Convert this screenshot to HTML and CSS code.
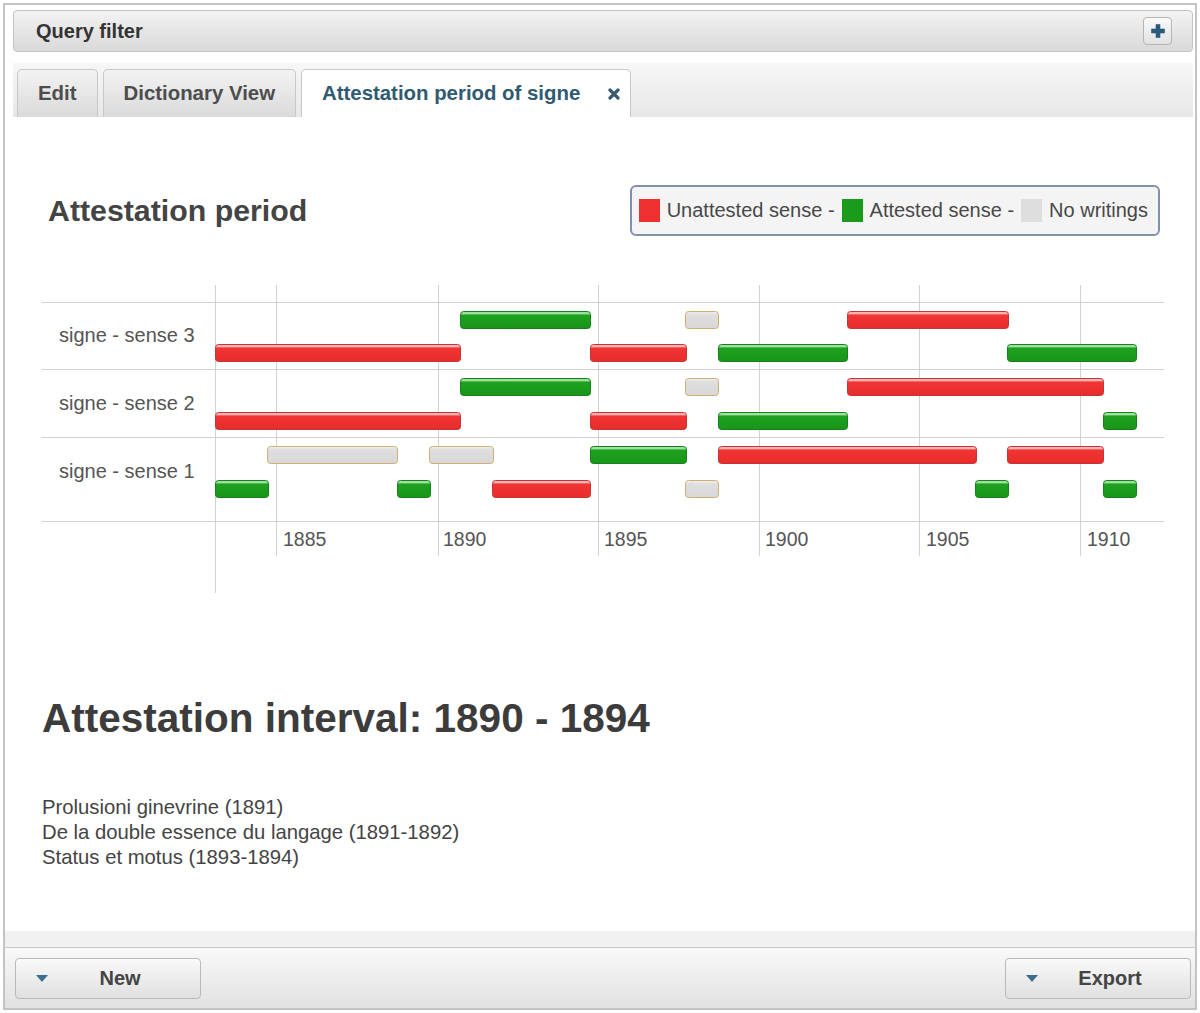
FILE: index.html
```html
<!DOCTYPE html>
<html>
<head>
<meta charset="utf-8">
<title>Attestation period</title>
<link rel="stylesheet" href="styles.css">
</head>
<body>
<div class="frame">
  <div class="qf-header">
    <span class="qf-title">Query filter</span>
    <button class="icon-btn" aria-label="Add">
      <svg width="14" height="14" viewBox="0 0 14 14"><path d="M5 0.5h4v4.5h4.5v4H9v4.5H5V9H0.5V5H5z" fill="#2c5a7a" stroke="#2c5a7a" stroke-width="0.6" stroke-linejoin="round"/></svg>
    </button>
  </div>

  <div class="tabbar">
    <div class="tab">Edit</div>
    <div class="tab">Dictionary View</div>
    <div class="tab active">Attestation period of signe
      <svg class="close" width="12" height="12" viewBox="0 0 12 12"><path d="M2 2L10 10M10 2L2 10" stroke="#3a5b6f" stroke-width="3.2" stroke-linecap="round"/></svg>
    </div>
  </div>

  <div class="content">
    <div class="chart-head">
      <h2 class="chart-title">Attestation period</h2>
      <div class="legend">
        <span class="sw sw-red"></span><span>Unattested sense -</span>
        <span class="sw sw-green"></span><span>Attested sense -</span>
        <span class="sw sw-gray"></span><span>No writings</span>
      </div>
    </div>

    <svg class="chart" width="1122" height="308" viewBox="0 0 1122 308">
      <defs>
        <linearGradient id="gr" x1="0" y1="0" x2="0" y2="1">
          <stop offset="0" stop-color="#f9b3b3"/>
          <stop offset="0.14" stop-color="#f9b3b3"/>
          <stop offset="0.2" stop-color="#f13434"/>
          <stop offset="1" stop-color="#e82c2c"/>
        </linearGradient>
        <linearGradient id="gg" x1="0" y1="0" x2="0" y2="1">
          <stop offset="0" stop-color="#9fe0a0"/>
          <stop offset="0.14" stop-color="#9fe0a0"/>
          <stop offset="0.2" stop-color="#1ea21e"/>
          <stop offset="1" stop-color="#199519"/>
        </linearGradient>
        <linearGradient id="gy" x1="0" y1="0" x2="0" y2="1">
          <stop offset="0" stop-color="#f2f2f2"/>
          <stop offset="0.2" stop-color="#dedede"/>
          <stop offset="1" stop-color="#d8d8d8"/>
        </linearGradient>
      </defs>

      <g class="grid">
        <line x1="0" y1="17.5" x2="1122" y2="17.5"/>
        <line x1="0" y1="84.5" x2="1122" y2="84.5"/>
        <line x1="0" y1="152.5" x2="1122" y2="152.5"/>
        <line x1="0" y1="236.5" x2="1122" y2="236.5"/>
        <line x1="173.5" y1="0" x2="173.5" y2="308"/>
        <line x1="234.5" y1="0" x2="234.5" y2="271"/>
        <line x1="396.5" y1="0" x2="396.5" y2="271"/>
        <line x1="556.5" y1="0" x2="556.5" y2="271"/>
        <line x1="717.5" y1="0" x2="717.5" y2="271"/>
        <line x1="877.5" y1="0" x2="877.5" y2="271"/>
        <line x1="1038.5" y1="0" x2="1038.5" y2="271"/>
      </g>

      <g class="lbl rows">
        <text x="17" y="57">signe - sense 3</text>
        <text x="17" y="125">signe - sense 2</text>
        <text x="17" y="193">signe - sense 1</text>
      </g>
      <g class="lbl years">
        <text x="241" y="261">1885</text>
        <text x="401" y="261">1890</text>
        <text x="562" y="261">1895</text>
        <text x="723" y="261">1900</text>
        <text x="884" y="261">1905</text>
        <text x="1045" y="261">1910</text>
      </g>

      <!-- sense 3 -->
      <rect class="b-g" x="418.5" y="26.5" width="130" height="17" rx="3"/>
      <rect class="b-y" x="643.5" y="26.5" width="33" height="17" rx="3"/>
      <rect class="b-r" x="805.5" y="26.5" width="161" height="17" rx="3"/>
      <rect class="b-r" x="173.5" y="59.5" width="245" height="17" rx="3"/>
      <rect class="b-r" x="548.5" y="59.5" width="96" height="17" rx="3"/>
      <rect class="b-g" x="676.5" y="59.5" width="129" height="17" rx="3"/>
      <rect class="b-g" x="965.5" y="59.5" width="129" height="17" rx="3"/>

      <!-- sense 2 -->
      <rect class="b-g" x="418.5" y="93.5" width="130" height="17" rx="3"/>
      <rect class="b-y" x="643.5" y="93.5" width="33" height="17" rx="3"/>
      <rect class="b-r" x="805.5" y="93.5" width="256" height="17" rx="3"/>
      <rect class="b-r" x="173.5" y="127.5" width="245" height="17" rx="3"/>
      <rect class="b-r" x="548.5" y="127.5" width="96" height="17" rx="3"/>
      <rect class="b-g" x="676.5" y="127.5" width="129" height="17" rx="3"/>
      <rect class="b-g" x="1061.5" y="127.5" width="33" height="17" rx="3"/>

      <!-- sense 1 -->
      <rect class="b-y" x="225.5" y="161.5" width="130" height="17" rx="3"/>
      <rect class="b-y" x="387.5" y="161.5" width="64" height="17" rx="3"/>
      <rect class="b-g" x="548.5" y="161.5" width="96" height="17" rx="3"/>
      <rect class="b-r" x="676.5" y="161.5" width="258" height="17" rx="3"/>
      <rect class="b-r" x="965.5" y="161.5" width="96" height="17" rx="3"/>
      <rect class="b-g" x="173.5" y="195.5" width="53" height="17" rx="3"/>
      <rect class="b-g" x="355.5" y="195.5" width="33" height="17" rx="3"/>
      <rect class="b-r" x="450.5" y="195.5" width="98" height="17" rx="3"/>
      <rect class="b-y" x="643.5" y="195.5" width="33" height="17" rx="3"/>
      <rect class="b-g" x="933.5" y="195.5" width="33" height="17" rx="3"/>
      <rect class="b-g" x="1061.5" y="195.5" width="33" height="17" rx="3"/>
    </svg>

    <h1 class="interval">Attestation interval: 1890 - 1894</h1>
    <ul class="works">
      <li>Prolusioni ginevrine (1891)</li>
      <li>De la double essence du langage (1891-1892)</li>
      <li>Status et motus (1893-1894)</li>
    </ul>
  </div>

  <div class="strip"></div>
  <div class="toolbar">
    <button class="tb-btn"><span class="caret"></span><span class="tb-label">New</span></button>
    <button class="tb-btn"><span class="caret"></span><span class="tb-label">Export</span></button>
  </div>
</div>
</body>
</html>
```

FILE: styles.css
```css
* { box-sizing: border-box; }

html, body {
  margin: 0;
  padding: 0;
  background: #ffffff;
  font-family: "Liberation Sans", Arial, sans-serif;
  color: #444;
}

.frame {
  margin: 3px;
  width: 1194px;
  height: 1007px;
  border: 2px solid #c4c4c4;
  display: flex;
  flex-direction: column;
  background: #fff;
}

/* Query filter header */
.qf-header {
  margin: 5px 2px 0 8px;
  height: 42px;
  border: 1px solid #c3c3c3;
  border-radius: 4px;
  background: linear-gradient(#f3f3f3, #d9d9d9);
  display: flex;
  align-items: center;
  justify-content: space-between;
  padding: 0 20px 0 22px;
}

.qf-title {
  font-size: 20px;
  font-weight: bold;
  color: #333;
}

.icon-btn {
  width: 29px;
  height: 28px;
  border: 1px solid #b5b5b5;
  border-radius: 4px;
  background: linear-gradient(#fafafa, #e2e2e2);
  display: flex;
  align-items: center;
  justify-content: center;
  padding: 0;
}

/* Tabs */
.tabbar {
  margin: 11px 2px 0 8px;
  height: 54px;
  background: linear-gradient(#f7f7f7, #e7e7e7);
  display: flex;
  align-items: flex-end;
  gap: 5px;
  padding-left: 4px;
}

.tab {
  height: 48px;
  border: 1px solid #c8c8c8;
  border-bottom: none;
  border-radius: 5px 5px 0 0;
  background: linear-gradient(#f3f3f3, #dadada);
  font-size: 20.4px;
  font-weight: bold;
  color: #4d4d4d;
  display: flex;
  align-items: center;
  padding: 0 20px;
}

.tab.active {
  background: #fff;
  color: #2f5a70;
  padding: 0 10px 0 20px;
}

.tab .close {
  margin-left: 28px;
}

/* Content */
.content {
  flex: 1;
  padding: 0 31px 0 37px;
}

.chart-head {
  margin: 68px 4px 0 0;
  display: flex;
  align-items: center;
  justify-content: space-between;
}

.chart-title {
  margin: 0 0 0 6px;
  font-size: 30.3px;
  font-weight: bold;
  color: #444;
}

.legend {
  height: 51px;
  border: 2px solid #8290ad;
  border-radius: 6px;
  background: #f4f4f4;
  display: flex;
  align-items: center;
  gap: 7px;
  padding: 0 10px 0 7px;
  font-size: 20px;
  color: #484848;
}

.sw {
  display: inline-block;
  width: 21px;
  height: 23px;
}
.sw-red { background: #ee3030; }
.sw-green { background: #1a9b1a; }
.sw-gray { background: #dedede; }

.chart {
  display: block;
  margin-top: 49px;
}

.grid line {
  stroke: #d2d2d2;
  stroke-width: 1;
}

.lbl text {
  font-family: "Liberation Sans", Arial, sans-serif;
  font-size: 19.5px;
  fill: #555;
}

.rows text {
  font-size: 20px;
}

.b-r { fill: url(#gr); stroke: #c53535; stroke-width: 1; }
.b-g { fill: url(#gg); stroke: #16801a; stroke-width: 1; }
.b-y { fill: url(#gy); stroke: #cfae72; stroke-width: 1; }

.interval {
  margin: 102px 0 0 0;
  font-size: 40.5px;
  line-height: 46px;
  font-weight: bold;
  color: #3c3c3c;
}

.works {
  margin: 54px 0 0 0;
  padding: 0;
  list-style: none;
  font-size: 20.3px;
  line-height: 25px;
  color: #444;
}

/* Bottom */
.strip {
  height: 16px;
  background: #f1f1f1;
}

.toolbar {
  height: 61px;
  border-top: 1px solid #c8c8c8;
  background: linear-gradient(#f9f9f9, #e1e1e1);
  display: flex;
  align-items: center;
  justify-content: space-between;
  padding: 0 4px 0 10px;
}

.tb-btn {
  width: 186px;
  height: 41px;
  border: 1px solid #b9b9b9;
  border-radius: 4px;
  background: linear-gradient(#f9f9f9, #e0e0e0);
  display: flex;
  align-items: center;
  padding: 0 8px 0 20px;
  font-family: "Liberation Sans", Arial, sans-serif;
}

.caret {
  width: 0;
  height: 0;
  border-left: 6px solid transparent;
  border-right: 6px solid transparent;
  border-top: 7px solid #3d6d8f;
}

.tb-label {
  flex: 1;
  text-align: center;
  font-size: 20px;
  font-weight: bold;
  color: #444;
}
```
